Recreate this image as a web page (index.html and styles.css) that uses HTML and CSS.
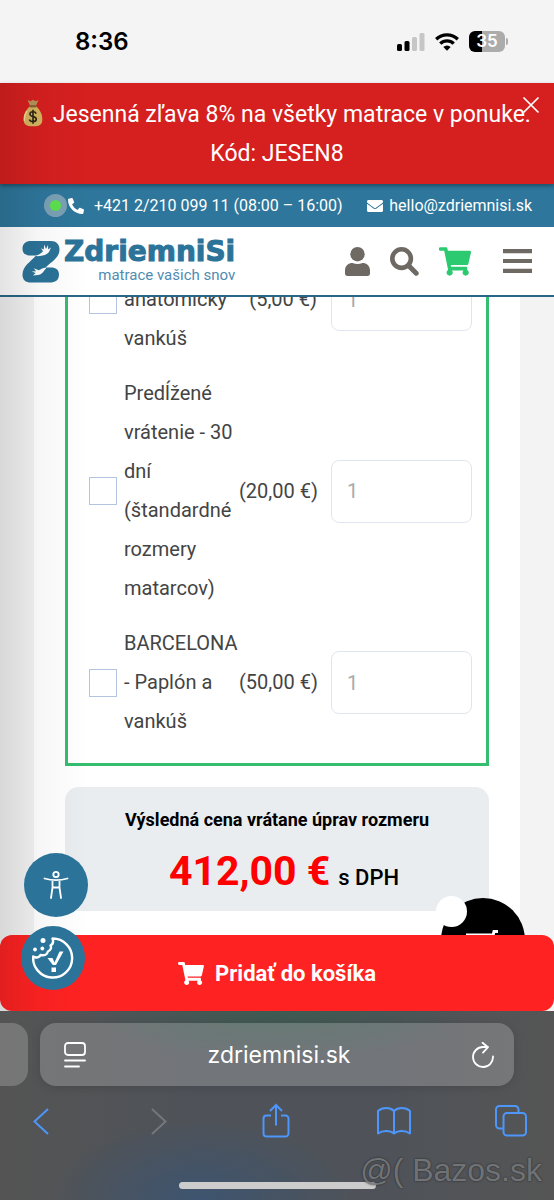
FILE: index.html
```html
<!DOCTYPE html>
<html lang="sk">
<head>
<meta charset="utf-8">
<meta name="viewport" content="width=device-width, initial-scale=1">
<title>ZdriemniSi – matrace vašich snov</title>
<link rel="stylesheet" href="styles.css">
</head>
<body>
<svg class="defs" aria-hidden="true">
  <symbol id="cart" viewBox="0 0 576 512"><path fill="currentColor" d="M528.12 301.319l47.273-208C578.806 78.301 567.391 64 551.99 64H159.208l-9.166-44.81C147.758 8.021 137.93 0 126.529 0H24C10.745 0 0 10.745 0 24v16c0 13.255 10.745 24 24 24h69.883l70.248 343.435C147.325 417.1 136 435.222 136 456c0 30.928 25.072 56 56 56s56-25.072 56-56c0-15.674-6.447-29.835-16.824-40h209.647C430.447 426.165 424 440.326 424 456c0 30.928 25.072 56 56 56s56-25.072 56-56c0-22.172-12.888-41.332-31.579-50.405l5.517-24.276c3.413-15.018-8.002-29.319-23.403-29.319H218.117l-6.545-32h293.145c11.206 0 20.92-7.754 23.403-18.681z"/></symbol>
</svg>
<div class="app">
  <div class="status">
    <span class="time">8:36</span>
    <span class="indicators">
      <svg width="28" height="18" viewBox="0 0 28 18"><rect x="0" y="11" width="5" height="7" rx="1.500"/><rect x="7.500" y="8" width="5" height="10" rx="1.500"/><rect x="15" y="4" width="5" height="14" rx="1.500" fill="#c6c6c6"/><rect x="22.500" y="0" width="5" height="18" rx="1.500" fill="#c6c6c6"/></svg>
      <svg width="24" height="18" viewBox="0 0 24 18"><g fill="none" stroke="#000" stroke-width="3.300"><path d="M1.200 6.300a15.400 15.400 0 0 1 21.600 0"/><path d="M5.300 10.700a9.500 9.500 0 0 1 13.400 0"/></g><path d="M12 17.800l-3.700-3.900a5.300 5.300 0 0 1 7.400 0z"/></svg>
      <span class="battery"><span class="battery-body">35</span><span class="battery-tip"></span></span>
    </span>
  </div>

  <div class="shop">
    <div class="promo">
      <svg class="bag" width="20" height="28" viewBox="0 0 20 28"><path d="M4.500 1l3 1.200L10 .8l2.500 1.400 3-1.200-2.700 6H7.200z" fill="#b8935a"/><path d="M7 7C4 10 .7 14 .7 20.500.700 25.500 3 27.300 10 27.300s9.300-1.800 9.300-6.800C19.300 14 16 10 13 7z" fill="#d6b45e"/><path d="M4 12c-2 3-3 6-2.500 10" stroke="#efd993" stroke-width="1.500" fill="none"/><rect x="6.300" y="6" width="7.400" height="2.400" rx="1.200" fill="#8a6535"/><path d="M13.200 14.600c-.6-1.300-1.700-1.900-3.200-1.900-4 0-4.200 4.200 0 4.900 4.500.7 4.200 5-.1 5-1.800 0-3-.7-3.500-2.200M10 10.800v14" fill="none" stroke="#2e2617" stroke-width="1.600"/></svg>
      Jesenná zľava 8% na všetky matrace v ponuke.<br>Kód: JESEN8
      <button class="close" aria-label="Zavrieť"><svg width="18" height="18" viewBox="0 0 18 18"><path d="M1.500 1.500l15 15M16.500 1.500l-15 15" stroke="#fff" stroke-width="1.700"/></svg></button>
    </div>

    <div class="contact">
      <a class="phone" href="tel:+421221009911"><span class="online"></span><svg width="16" height="16" viewBox="0 0 512 512"><path fill="#fff" d="M497.390 361.800l-112-48a24 24 0 0 0-28 6.900l-49.600 60.600A370.660 370.660 0 0 1 130.600 204.110l60.600-49.600a23.940 23.940 0 0 0 6.900-28l-48-112A24.160 24.160 0 0 0 122.600.610l-104 24A24 24 0 0 0 0 48c0 256.500 207.900 464 464 464a24 24 0 0 0 23.400-18.600l24-104a24.290 24.290 0 0 0-14.010-27.600z"/></svg><span class="number">+421 2/210 099 11 (08:00 – 16:00)</span></a>
      <a class="mail" href="mailto:hello@zdriemnisi.sk"><svg width="16" height="16" viewBox="0 0 512 512"><path fill="#fff" d="M502.300 190.800c3.900-3.100 9.700-.200 9.700 4.700V400c0 26.500-21.500 48-48 48H48c-26.500 0-48-21.500-48-48V195.600c0-5 5.700-7.800 9.700-4.700 22.400 17.400 52.100 39.500 154.100 113.600 21.100 15.400 56.700 47.800 92.200 47.600 35.700.3 72-32.800 92.300-47.600 102-74.100 131.600-96.300 154-113.700zM256 320c23.200.4 56.600-29.200 73.400-41.400 132.700-96.300 142.800-104.700 173.400-128.700 5.800-4.500 9.200-11.500 9.200-18.900v-19c0-26.500-21.500-48-48-48H48c-26.500 0-48 21.500-48 48v19c0 7.400 3.400 14.300 9.200 18.900 30.600 23.900 40.700 32.400 173.400 128.700 16.800 12.200 50.200 41.800 73.400 41.400z"/></svg>hello@zdriemnisi.sk</a>
    </div>

    <header class="header">
      <a class="logo" href="#">
        <svg width="38" height="43" viewBox="0 0 38 43"><path fill="#2b7399" d="M9 1h20c5 0 8.500 3 8.500 8.500C37.500 18 29 22 23.500 27.500H29c5 0 8 2.500 8 7 0 6-4 8-9 8H9c-5.500 0-8.500-2.500-8.500-8C.5 26 9 21.500 14 15.500H9c-5.500 0-8.500-2-8.500-7C.5 3.500 4 1 9 1z"/><path d="M13.500 15.500c3.500-.2 5.500-2.200 7.500-4.200l-2-3 2.800 1.300.4-5 1.800 4.500 2-4 .2 4.500 2.800-2-2 4.500c-2 3-6.500 3.700-12 4.200zM24 27.500c-3 .2-5 1.800-7.200 2.800l-5-2 2.300 2.900-4.500.2 4 1.600-2.600 2.500 5-.6c4 0 5.500-3.800 8-6.400z" fill="#fff"/></svg>
        <span class="brand"><span class="name">ZdriemniSi</span><span class="tagline">matrace vašich snov</span></span>
      </a>
      <nav class="tools">
        <button aria-label="Účet"><svg width="25" height="29" viewBox="0 0 25 29"><circle cx="12.500" cy="7.200" r="7.200" fill="#6f6964"/><path d="M0 23.500C0 18.500 3.500 16 7.500 16c3.300 1.300 6.700 1.300 10 0 4 0 7.500 2.500 7.500 7.500v3c0 1.500-1 2.500-2.500 2.500h-20C1 29 0 28 0 26.500z" fill="#6f6964"/></svg></button>
        <button aria-label="Hľadať"><svg width="29" height="29" viewBox="0 0 29 29"><circle cx="11.600" cy="11.600" r="9.300" fill="none" stroke="#6f6964" stroke-width="4.600"/><path d="M18.500 18.500l7.700 7.700" stroke="#6f6964" stroke-width="5" stroke-linecap="round"/></svg></button>
        <button class="green" aria-label="Košík"><svg width="32" height="29"><use href="#cart"/></svg></button>
        <button class="menu" aria-label="Menu"><svg width="29" height="24" viewBox="0 0 29 24"><path d="M0 2.200h29M0 12h29M0 21.800h29" stroke="#6f6964" stroke-width="4.200"/></svg></button>
      </nav>
    </header>

    <main class="page">
      <div class="panel">
        <div class="options">
          <div class="option first"><input type="checkbox" id="o1"><label for="o1">anatomický vankúš</label><span class="cost">(5,00 €)</span><input class="qty" type="text" placeholder="1" aria-label="Počet – anatomický vankúš"></div>
          <div class="option"><input type="checkbox" id="o2"><label for="o2">Predĺžené vrátenie - 30 dní (štandardné rozmery matarcov)</label><span class="cost">(20,00 €)</span><input class="qty" type="text" placeholder="1" aria-label="Počet – predĺžené vrátenie"></div>
          <div class="option"><input type="checkbox" id="o3"><label for="o3">BARCELONA - Paplón a vankúš</label><span class="cost">(50,00 €)</span><input class="qty" type="text" placeholder="1" aria-label="Počet – BARCELONA"></div>
        </div>
        <div class="total">
          <div class="total-label">Výsledná cena vrátane úprav rozmeru</div>
          <div class="total-value"><span class="sum">412,00 €</span><span class="vat">s DPH</span></div>
        </div>
      </div>
      <button class="mini-cart" aria-label="Zobraziť košík"><svg width="34" height="24" viewBox="0 0 34 24"><path d="M1 7h23l-3 11H5zM32 3.500h-4L24 20H8" fill="none" stroke="#fff" stroke-width="3"/></svg><span class="bubble"></span></button>
    </main>

    <div class="buy-bar"><button class="buy"><svg width="26" height="23"><use href="#cart"/></svg>Pridať do košíka</button></div>

    <div class="edge"></div>
    <button class="round access" aria-label="Prístupnosť"><svg width="26" height="30" viewBox="0 0 26 30"><g fill="none" stroke="#fff" stroke-width="1.800" stroke-linejoin="round" stroke-linecap="round"><circle cx="13" cy="4.500" r="2.700"/><path d="M1.500 8.500c7.500 2 15.500 2 23 0M9.500 10.300v7.200L8 28M16.500 10.300v7.200L18 28M9.500 17.500h7"/></g></svg></button>
    <button class="round cookie" aria-label="Cookies"><svg width="42" height="42" viewBox="0 0 42 42"><path d="M20.500 1.500a19.500 19.500 0 1 1-19.300 18c3 2 6.300.8 7.300-1.500 4 1 7-.5 7.300-3.500 3.500-1.500 3.700-4 2.700-6 2.500-1.500 3.200-4 2-7z" fill="none" stroke="#fff" stroke-width="2.400" stroke-linejoin="round"/><circle cx="11" cy="3.500" r="2.500" fill="#fff"/><circle cx="3" cy="12.500" r="1.900" fill="#fff"/><circle cx="10.300" cy="11.500" r="1.900" fill="#fff"/><path d="M15.500 21h5l2 4.500L27.500 14.500h4L24 28h-3.200z" fill="#fff"/><rect x="19.500" y="30.500" width="4.500" height="4.500" fill="#fff"/></svg></button>
  </div>

  <footer class="browser">
    <div class="tabs">
      <div class="tab-peek"></div>
      <div class="address">
        <button aria-label="Zobrazenie"><svg width="22" height="26" viewBox="0 0 22 26"><g fill="none" stroke="#fff" stroke-width="1.800" stroke-linecap="round"><rect x="1" y="1" width="20" height="12" rx="3"/><path d="M1 18.500h20M1 24.500h14"/></g></svg></button>
        <span>zdriemnisi.sk</span>
        <button aria-label="Obnoviť"><svg width="22" height="26" viewBox="0 0 22 26"><path d="M21 14.500A10 10 0 1 1 11 5h5M10.500.8L16 5.200l-5 5.500" fill="none" stroke="#fff" stroke-width="1.800" stroke-linecap="round" stroke-linejoin="round"/></svg></button>
      </div>
    </div>
    <nav class="toolbar">
      <button aria-label="Späť"><svg width="16" height="27" viewBox="0 0 16 27"><path d="M15 1L1.500 13.500 15 26" fill="none" stroke="#4d96fb" stroke-width="2"/></svg></button>
      <button aria-label="Dopredu"><svg width="16" height="27" viewBox="0 0 16 27"><path d="M1 1l13.500 12.500L1 26" fill="none" stroke="#74777b" stroke-width="2"/></svg></button>
      <button aria-label="Zdieľať"><svg width="28" height="36" viewBox="0 0 28 36"><path d="M9 12.500H4.500a3 3 0 0 0-3 3v15a3 3 0 0 0 3 3h19a3 3 0 0 0 3-3v-15a3 3 0 0 0-3-3H19M14 22.500V2M8 8l6-6 6 6" fill="none" stroke="#4d96fb" stroke-width="2"/></svg></button>
      <button aria-label="Záložky"><svg width="34" height="28" viewBox="0 0 34 28"><path d="M17 4C13 0 5.500 0 1 4v22.500c4.500-3.500 12-3.500 16 0 4-3.500 11.500-3.500 16 0V4C28.500 0 21 0 17 4zm0 0v22.500" fill="none" stroke="#4d96fb" stroke-width="2" stroke-linejoin="round"/></svg></button>
      <button aria-label="Karty"><svg width="32" height="32" viewBox="0 0 32 32"><g fill="none" stroke="#4d96fb" stroke-width="2"><path d="M8.500 23.500H4.500a3.500 3.500 0 0 1-3.500-3.500V4.500A3.500 3.500 0 0 1 4.500 1H20a3.500 3.500 0 0 1 3.500 3.500v3"/><rect x="8.500" y="8" width="22.500" height="22.500" rx="3.500"/></g></svg></button>
    </nav>
    <div class="home"></div>
    <div class="watermark">@( Bazos.sk</div>
  </footer>
</div>
</body>
</html>
```
FILE: styles.css
```css
* { box-sizing: border-box; }
body { margin: 0; font-family: Roboto, "Liberation Sans", sans-serif; color: #444; }
button { border: 0; padding: 0; background: none; font: inherit; color: inherit; display: block; }
svg { display: block; flex: none; }
a { color: inherit; text-decoration: none; }
.defs { position: absolute; width: 0; height: 0; }
.app { height: 100vh; display: flex; flex-direction: column; overflow: hidden; background: #f4f4f4; }

.status { flex: none; height: 83px; padding: 0 46px 0 75px; display: flex; align-items: center; justify-content: space-between; color: #000; }
.time { font: 600 24px/28px Inter, sans-serif; }
.indicators { display: flex; align-items: center; gap: 10px; }
.battery { display: flex; align-items: center; gap: 1px; }
.battery-body { width: 36px; height: 21px; border-radius: 6px; background: linear-gradient(90deg, #000 36%, #acacac 36%); color: #fff; font: 600 17px/21px Inter, sans-serif; text-align: center; }
.battery-tip { width: 2px; height: 7px; border-radius: 0 2px 2px 0; background: #acacac; }

.shop { flex: 1; min-height: 0; position: relative; display: flex; flex-direction: column; }
.promo { flex: none; position: relative; z-index: 2; padding: 12px 20px 11px; background: #d61f1f; color: #fff; font-size: 23px; line-height: 39px; text-align: center; box-shadow: 0 2px 4px rgba(0, 0, 0, .35); }
.bag { display: inline-block; vertical-align: -5px; margin-right: 4px; }
.close { position: absolute; top: 13px; right: 14px; }
.contact { flex: none; height: 43px; padding: 0 22px 0 44px; display: flex; align-items: center; justify-content: space-between; background: #2e769b; color: #fff; font-size: 16px; line-height: 20px; }
.phone, .mail { display: flex; align-items: center; white-space: nowrap; }
.mail { gap: 6px; }
.online { width: 23px; height: 23px; margin-right: 1px; border: 6px solid #7ba0b4; border-radius: 50%; background: #5be04e; }
.number { margin-left: 10px; }
.header { flex: none; height: 70px; padding: 0 22px; display: flex; align-items: center; justify-content: space-between; background: #fff; border-bottom: 2px solid #2a6786; position: relative; z-index: 1; }
.logo { display: flex; align-items: center; gap: 4px; }
.brand { display: flex; flex-direction: column; align-items: flex-end; color: #2b7399; }
.name { font: 700 28px/28px "DejaVu Sans", sans-serif; -webkit-text-stroke: 1px #2b7399; }
.tagline { font-size: 15px; line-height: 18px; color: #4f8cb0; }
.tools { display: flex; align-items: center; gap: 20px; }
.green { color: #2bc970; }
.menu { margin-left: 12px; }

.page { flex: 1; min-height: 0; overflow: hidden; position: relative; display: flex; flex-direction: column; justify-content: flex-end; padding: 0 34px; background: #f3f3f3; }
.panel { background: #fff; padding: 0 31px 24px; }
.options { border: 3px solid #35bd70; padding: 0 14px 14px 21px; margin-bottom: 21px; }
.option { display: grid; grid-template-columns: 28px minmax(0, 1fr) 78px 155px; align-items: center; padding: 8px 0; font-size: 20px; line-height: 39px; }
.option.first { min-height: 133px; }
.option.first label { align-self: end; }
.option label { padding-left: 7px; }
.option input[type=checkbox] { appearance: none; width: 28px; height: 28px; margin: 0; border: 1px solid #b3c3e0; background: #fff; }
.cost { text-align: right; white-space: nowrap; }
.option .qty { height: 63px; min-width: 0; margin-left: 14px; padding: 0 15px; border: 1px solid #dfe5ef; border-radius: 8px; font: inherit; background: #fff; }
.qty::placeholder { color: #aaa; opacity: 1; }
.total { height: 124px; padding-top: 18px; border-radius: 14px; background: #e9edf0; text-align: center; color: #000; }
.total-label { font-size: 18px; line-height: 30px; font-weight: 700; }
.total-value { display: flex; justify-content: center; align-items: baseline; gap: 8px; padding-left: 14px; }
.sum { font-size: 41px; line-height: 72px; font-weight: 700; color: #f00; }
.vat { font-size: 22px; font-weight: 500; }
.mini-cart { position: absolute; right: 29px; bottom: -47px; width: 84px; height: 84px; border-radius: 50%; background: #000; display: grid; place-items: center; }
.bubble { position: absolute; left: -5px; top: -2px; width: 31px; height: 31px; border-radius: 50%; background: #fff; }
.buy-bar { flex: none; background: #f3f3f3; }
.buy { width: 100%; height: 76px; border-radius: 12px; background: #ff2222; color: #fff; display: flex; align-items: center; justify-content: center; gap: 11px; font-size: 22px; font-weight: 700; }
.edge { position: absolute; z-index: 3; inset: 0 auto 0 0; width: 90px; background: linear-gradient(90deg, rgba(0, 0, 0, .11), rgba(0, 0, 0, .03) 45%, transparent); pointer-events: none; }
.round { position: absolute; z-index: 4; width: 64px; height: 64px; border-radius: 50%; background: #2b7399; display: grid; place-items: center; }
.access { left: 24px; bottom: 94px; }
.cookie { left: 21px; bottom: 21px; }

.browser { flex: none; height: 189px; position: relative; padding-top: 12px; background: radial-gradient(ellipse 150px 80px at 36% 100%, #3d546f, transparent), radial-gradient(ellipse 190px 50px at 50% 0, #3e5a50, transparent), linear-gradient(90deg, #545454, #4f5359 35%, #4f5359 70%, #555); }
.tabs { display: flex; gap: 12px; padding-right: 40px; }
.tab-peek { width: 28px; border-radius: 0 16px 16px 0; background: rgba(255, 255, 255, .2); }
.address { flex: 1; height: 63px; padding: 0 20px 0 24px; border-radius: 16px; background: rgba(255, 255, 255, .2); box-shadow: 0 2px 10px rgba(0, 0, 0, .12); display: flex; align-items: center; justify-content: space-between; color: #fff; font: 23px/30px Inter, sans-serif; }
.toolbar { display: flex; align-items: center; justify-content: space-between; height: 70px; padding: 0 26px 0 24px; }
.toolbar button { width: 34px; display: grid; place-items: center; }
.home { position: absolute; left: 50%; bottom: 11px; width: 197px; height: 7px; margin-left: -98px; border-radius: 4px; background: #ccc; }
.watermark { position: absolute; right: 12px; bottom: 12px; font: 32px/36px "Liberation Sans", Arial, sans-serif; color: rgba(135, 138, 142, .75); text-shadow: 0 0 2px rgba(20, 20, 20, .8); }
```
